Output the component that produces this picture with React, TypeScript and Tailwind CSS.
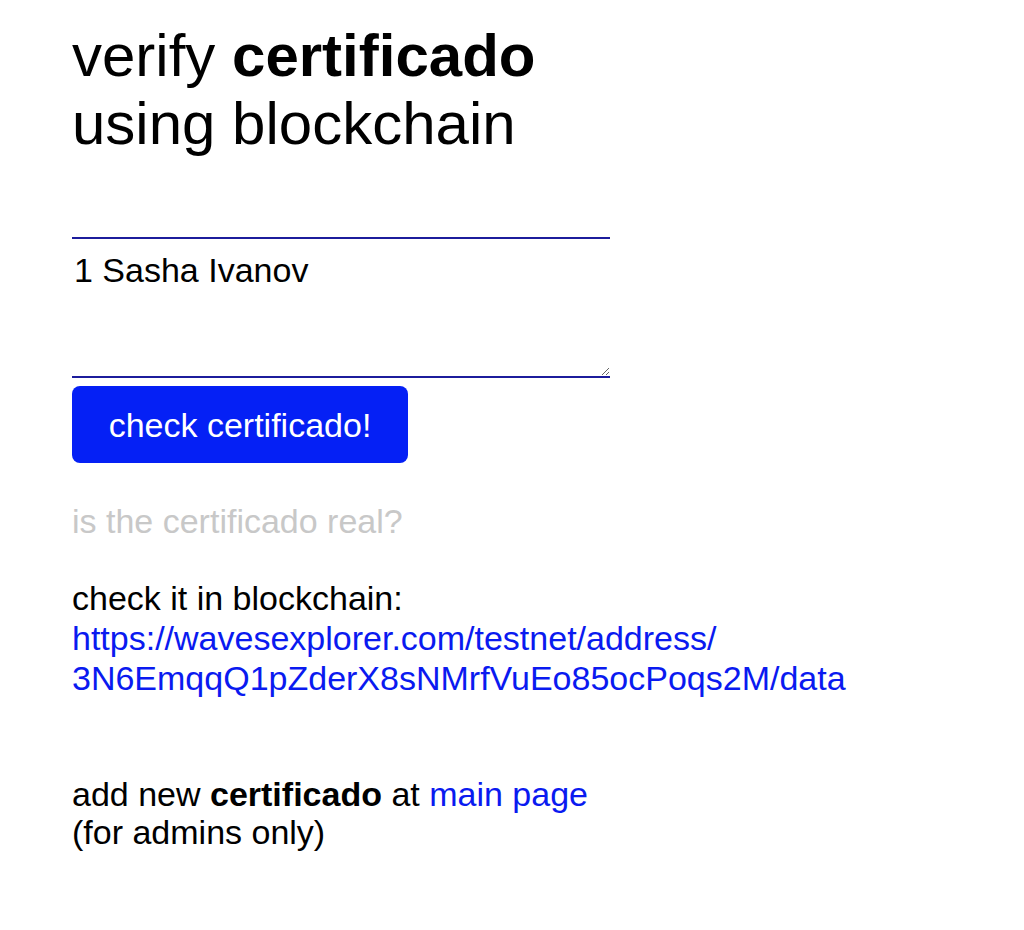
import React from 'react';

const App: React.FC = () => {
  return (
    <div className="min-h-[930px] bg-white pl-[72px] pt-[22px] text-black font-['Liberation_Sans',Arial,sans-serif]">
      {/* Title */}
      <h1 className="text-[60px] leading-[68px] font-normal">
        verify <b className="font-bold">certificado</b>
        <br />
        using blockchain
      </h1>

      {/* Name input */}
      <textarea
        defaultValue="1 Sasha Ivanov"
        className="mt-[79px] block w-[538px] h-[141px] border-y-[2px] border-x-0 border-[#1c1c9c] pt-[11px] px-[2px] text-[34px] leading-[40px] outline-none resize-y"
      />

      <button className="mt-[8px] block w-[336px] h-[77px] rounded-[8px] bg-[#0520f5] text-white text-[34px] leading-[40px]">
        check certificado!
      </button>

      <p className="mt-[38px] text-[34px] leading-[40px] text-[#c8c8c8]">is the certificado real?</p>

      <div className="mt-[37px] text-[34px] leading-[40px]">
        <p>check it in blockchain:</p>
        <a href="#" className="text-[#0a1af0]">
          https://wavesexplorer.com/testnet/address/
          <br />
          3N6EmqqQ1pZderX8sNMrfVuEo85ocPoqs2M/data
        </a>
      </div>

      <div className="mt-[77px] text-[34px] leading-[38px]">
        <p>
          add new <b className="font-bold">certificado</b> at{' '}
          <a href="#" className="text-[#0a1af0]">main page</a>
        </p>
        <p>(for admins only)</p>
      </div>
    </div>
  );
};

export default App;
